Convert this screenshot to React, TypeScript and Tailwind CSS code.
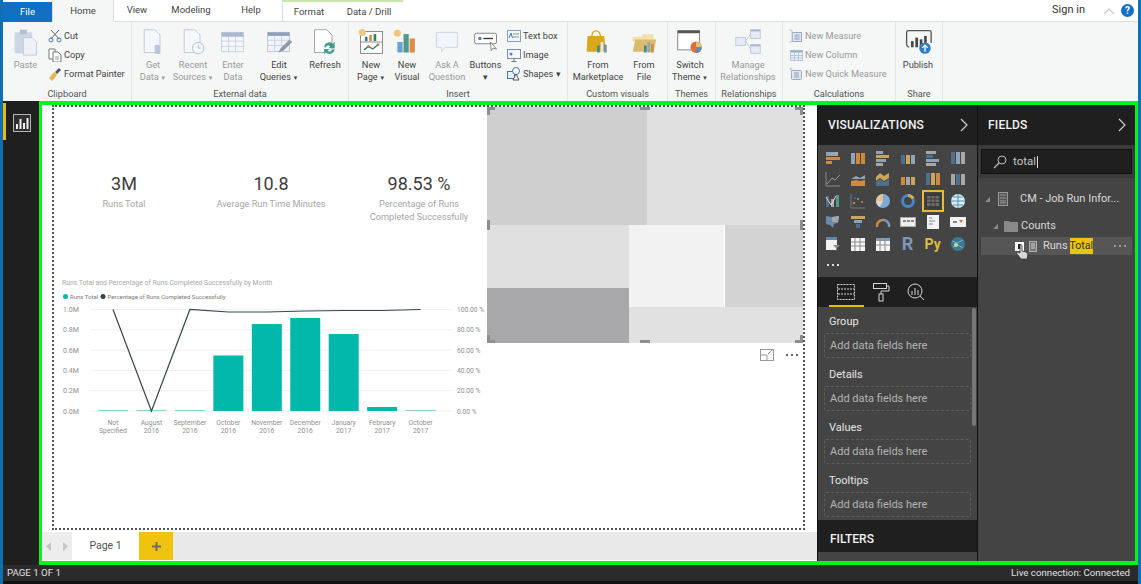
import React from "react";

const F = "font-[family-name:Roboto,sans-serif]";

const S = ({ w = 32, h = 32, children }: { w?: number; h?: number; children: React.ReactNode }) => {
  const big = w >= 30;
  return (
    <svg width={big ? w * 0.875 : w} height={big ? h * 0.875 : h} viewBox={`0 0 ${w} ${h}`} fill="none">{children}</svg>
  );
};

const Doc = () => <path d="M6 2h12l6 6v20H6z" fill="#f4f7fb" stroke="#b9c6d8" />;
const Icons: Record<string, React.ReactNode> = {
  paste: (
    <S>
      <rect x="3" y="5" width="20" height="24" fill="#cdd6e4" />
      <rect x="9" y="2" width="8" height="5" fill="#b4bfd0" />
      <path d="M13 11h10l5 5v15H13z" fill="#eef2f8" stroke="#c0cadb" />
    </S>
  ),
  get: (
    <S>
      <Doc />
      <path d="M24 20v9c0 1-5 1-6 0v-9c1-1 5-1 6 0z" fill="#b9c7dc" />
    </S>
  ),
  recent: (
    <S>
      <Doc />
      <circle cx="22" cy="23" r="6.5" fill="#f4f7fb" stroke="#a8bcd0" />
      <path d="M22 19v4h3" stroke="#a8bcd0" />
    </S>
  ),
  enter: (
    <S>
      <rect x="3" y="5" width="25" height="22" fill="#f4f7fb" stroke="#c5d0e0" />
      <rect x="3" y="5" width="25" height="5" fill="#a9b8cf" />
      <path d="M3 15h25M3 21h25M11 10v17M19 10v17" stroke="#c5d0e0" />
    </S>
  ),
  edit: (
    <S>
      <rect x="3" y="5" width="25" height="22" fill="#f0f4fa" stroke="#b5c2d6" />
      <rect x="3" y="5" width="25" height="4" fill="#8d9fba" />
      <path d="M3 14h25M3 20h25M11 9v18M19 9v18" stroke="#c5d0e0" />
      <path d="M15 28l3-5 10-10 3 3-10 10z" fill="#8f99a6" />
    </S>
  ),
  refresh: (
    <S>
      <path d="M4 2h14l6 6v20H4z" fill="#fff" stroke="#9a9a9a" />
      <path d="M15 22a6 6 0 0 1 10-4l2-2v7h-7l2-2a3 3 0 0 0-5 1zM27 24a6 6 0 0 1-10 4l-2 2v-6h6l-2 2a3 3 0 0 0 5-1z" fill="#3d9d8a" />
    </S>
  ),
  newpage: (
    <S>
      <rect x="4" y="4" width="25" height="25" fill="#fff" stroke="#7b7b7b" />
      <path d="M4 16h25" stroke="#7b7b7b" />
      <circle cx="6" cy="5" r="4" fill="#f0c87a" />
      <rect x="9" y="10" width="3" height="5" fill="#2f7f74" />
      <rect x="14" y="8" width="3" height="7" fill="#d98a3e" />
      <rect x="19" y="7" width="3" height="8" fill="#2f7f74" />
      <path d="M8 25l5-4 5 3 6-5" stroke="#2f7f74" strokeWidth="1.5" />
      <circle cx="13" cy="21" r="1.5" fill="#d9703e" />
      <circle cx="24" cy="19" r="1.5" fill="#d9703e" />
    </S>
  ),
  newvisual: (
    <S>
      <circle cx="5" cy="6" r="4" fill="#f0c87a" />
      <rect x="5" y="16" width="6" height="12" fill="#6f9fd8" />
      <rect x="12" y="7" width="6" height="21" fill="#4c9a8c" />
      <rect x="19" y="12" width="6" height="16" fill="#e08a45" />
    </S>
  ),
  ask: (
    <S>
      <path d="M4 5h24v17H14l-4 5v-5H4z" fill="#f2f6fc" stroke="#c3d2e6" />
    </S>
  ),
  buttons: (
    <S>
      <rect x="3" y="6" width="25" height="12" rx="2" fill="#fff" stroke="#777" />
      <circle cx="9" cy="12" r="2" fill="#4d80b8" />
      <path d="M13 12h11" stroke="#333" strokeWidth="1.5" />
      <path d="M21 16l1 10 2-3 4 1z" fill="#fff" stroke="#777" />
    </S>
  ),
  market: (
    <S>
      <path d="M4 9h19l2 18H3z" fill="#d9a81c" />
      <path d="M9 10c0-9 9-9 10 0" stroke="#d9a81c" strokeWidth="1.5" />
      <rect x="15" y="20" width="3" height="8" fill="#3e8f86" />
      <rect x="19" y="16" width="3" height="12" fill="#e8e8e8" />
      <rect x="23" y="19" width="3" height="9" fill="#6f92b6" />
    </S>
  ),
  file: (
    <S>
      <path d="M3 10h10l2-3h12v8H3z" fill="#f3e0ac" />
      <path d="M3 27l3-14h24l-3 14z" fill="#dcbb6e" />
      <rect x="16" y="20" width="3" height="8" fill="#3e8f86" />
      <rect x="20" y="16" width="3" height="12" fill="#8fa6bd" />
      <rect x="24" y="18" width="3" height="10" fill="#d98a3e" />
    </S>
  ),
  theme: (
    <S>
      <rect x="2" y="3" width="25" height="22" fill="#fff" stroke="#777" />
      <rect x="2" y="3" width="25" height="3" fill="#555" />
      <circle cx="23" cy="22" r="6.5" fill="#d9703e" />
      <path d="M23 22v-6.5a6.5 6.5 0 0 1 6.5 6.5z" fill="#e6c36b" />
      <path d="M23 22h6.5a6.5 6.5 0 0 1-6.5 6.5z" fill="#5c8db8" />
    </S>
  ),
  rel: (
    <S>
      <rect x="2" y="11" width="11" height="9" fill="#e5ecf5" stroke="#b9c7da" />
      <rect x="19" y="2" width="11" height="10" fill="#e5ecf5" stroke="#b9c7da" />
      <rect x="19" y="19" width="11" height="10" fill="#e5ecf5" stroke="#b9c7da" />
      <path d="M13 15l6-8M13 15l6 9" stroke="#b9c7da" />
      <rect x="19" y="2" width="11" height="2" fill="#a9b8cc" />
      <rect x="19" y="19" width="11" height="2" fill="#a9b8cc" />
    </S>
  ),
  publish: (
    <S w={32}>
      <path d="M3 19V5c0-1 1-2 2-2h24c1 0 2 1 2 2v12M3 19c0 1 1 2 3 3" stroke="#555" strokeWidth="1.5" />
      <rect x="8" y="15" width="3" height="7" fill="#444" />
      <rect x="13" y="11" width="3" height="11" fill="#444" />
      <rect x="18" y="13" width="3" height="9" fill="#444" />
      <rect x="23" y="9" width="3" height="8" fill="#444" />
      <circle cx="24" cy="23" r="6.5" fill="#2d7fc1" />
      <path d="M24 27v-7M21 22.5l3-3 3 3" stroke="#fff" strokeWidth="1.5" />
    </S>
  ),
};

const Small = {
  cut: (
    <S w={14} h={14}>
      <path d="M3 1l8 9M11 1L3 10" stroke="#666" />
      <circle cx="3" cy="11" r="2" stroke="#3a78b8" />
      <circle cx="11" cy="11" r="2" stroke="#3a78b8" />
    </S>
  ),
  copy: (
    <S w={14} h={14}>
      <path d="M1 1h6v10H1z" fill="#fff" stroke="#777" />
      <path d="M5 4h5l3 3v7H5z" fill="#fff" stroke="#777" />
      <path d="M7 9h4M7 11h4" stroke="#999" />
    </S>
  ),
  painter: (
    <S w={14} h={14}>
      <path d="M1 11l5-6 3 3-5 6z" fill="#e4b64e" />
      <path d="M7 5l4-4 2 2-4 4z" fill="#555" />
    </S>
  ),
  text: (
    <S w={14} h={14}>
      <rect x="0.5" y="1.5" width="13" height="11" fill="#f4f7fb" stroke="#8aa0bb" />
      <path d="M6 5h6M6 8h6" stroke="#8f8f8f" />
      <path d="M2 9l2-5 1.5 5" stroke="#3f78b5" />
    </S>
  ),
  image: (
    <S w={14} h={14}>
      <rect x="0.5" y="1.5" width="13" height="9" fill="#f4f7fb" stroke="#7d8ea4" />
      <circle cx="4" cy="6" r="1.5" fill="#4a86c2" />
      <path d="M7 10.5V13M4.5 13.5h5" stroke="#777" />
    </S>
  ),
  shapes: (
    <S w={14} h={14}>
      <rect x="0.5" y="4.5" width="7" height="7" fill="#e8f0fa" stroke="#3f78b5" />
      <circle cx="9" cy="4" r="3.5" fill="#fff" stroke="#3f78b5" />
      <path d="M9 7l3 6H6z" fill="#fff" stroke="#555" />
    </S>
  ),
  measure: (
    <S w={14} h={14}>
      <rect x="3.5" y="3.5" width="9" height="9" fill="#dfe7f2" stroke="#9aaac0" />
      <path d="M0 1h3v12H0" stroke="#bcc6d3" />
      <path d="M5.5 6h5M5.5 8h5M5.5 10h5" stroke="#8e9db3" />
    </S>
  ),
  column: (
    <S w={14} h={14}>
      <rect x="1.5" y="2.5" width="12" height="10" fill="#eef3f9" stroke="#b5c5da" />
      <rect x="1.5" y="2.5" width="12" height="2" fill="#98adc9" />
      <path d="M5.5 4v8M9.5 4v8M2 7.5h11M2 10h11" stroke="#b5c5da" />
    </S>
  ),
  quick: (
    <S w={14} h={14}>
      <rect x="2.5" y="3.5" width="10" height="9" rx="1" fill="#dfe7f2" stroke="#9aaac0" />
      <path d="M5 6h5M5 8h5M5 10h5" stroke="#8e9db3" />
      <circle cx="2" cy="2" r="1.5" fill="#c9d1dc" />
    </S>
  ),
};

const Large = ({ icon, l1, l2, gray, w, arrow }: { icon: string; l1: string; l2?: string; gray?: boolean; w: string; arrow?: boolean }) => (
  <div className={`flex flex-col items-center shrink-0 ${w}`}>
    <div className="h-[28px] mt-[6px]">{Icons[icon]}</div>
    <div className={`mt-[3px] text-[9.2px] leading-[12px] text-center whitespace-nowrap ${gray ? "text-[#9a9a9a]" : "text-[#444]"}`}>
      <div>{l1}</div>
      <div>{l2 ?? "\u00a0"}{arrow && <span className="text-[6px] align-middle"> ▼</span>}</div>
    </div>
  </div>
);

const SmallBtn = ({ icon, t, gray }: { icon: keyof typeof Small; t: string; gray?: boolean }) => (
  <div className="flex items-center gap-[2px] h-[19px] whitespace-nowrap">
    <span className="w-[14px] h-[14px] shrink-0 flex">{Small[icon]}</span>
    <span className={`text-[9.2px] ${gray ? "text-[#9a9a9a]" : "text-[#444]"}`}>{t}</span>
  </div>
);

const Group = ({ w, label, children, cls = "" }: { w: string; label: string; children: React.ReactNode; cls?: string }) => (
  <div className={`h-full shrink-0 flex flex-col border-r border-[#e4e5e5] ${w}`}>
    <div className={`flex-1 flex ${cls}`}>{children}</div>
    <div className="h-[17px] pt-[3px] text-center text-[9.2px] leading-[14px] text-[#555] whitespace-nowrap">{label}</div>
  </div>
);

const Vz = ({ k }: { k: number }) => {
  const o = "#d08a3c", b = "#8fa4b9", g = "#a7a7a7", t = "#c8a65c", d = "#4f6f8d";
  const bars = (cs: string[]) => (
    <>
      {cs.map((c, i) => (
        <rect key={i} x={1 + i * 5} y={2 + ((i * 5 + k) % 5)} width="4" height={12 - ((i * 5 + k) % 5)} fill={c} />
      ))}
    </>
  );
  const hbars = (cs: string[]) => (
    <>
      {cs.map((c, i) => (
        <rect key={i} x="1" y={1 + i * 4} width={13 - ((i + k) % 3) * 3} height="3" fill={c} />
      ))}
    </>
  );
  let n: React.ReactNode;
  switch (k) {
    case 0: n = <><rect x="1" y="2" width="8" height="4" fill={b} /><rect x="9" y="2" width="4" height="4" fill={g} /><rect x="1" y="7" width="14" height="3" fill={o} /><rect x="1" y="11" width="6" height="3" fill={o} /></>; break;
    case 1: n = bars([b, o, o]); break;
    case 2: n = hbars([b, t, b, g]); break;
    case 3: n = bars([d, t, b]); break;
    case 4: n = hbars([g, d, b, g]); break;
    case 5: n = bars([d, b, g]); break;
    case 6: n = <><path d="M1 1v14h14" stroke="#8b8b8b" /><path d="M2 13l5-6 3 2 5-5" stroke="#9a9a9a" /></>; break;
    case 7: n = <><path d="M1 8l5-3 4 2 5-3v4H1z" fill={b} /><path d="M1 10l5-1 4 1 5-1v6H1z" fill={o} /></>; break;
    case 8: n = <><path d="M1 6l4-4 4 3 5-3v5l-5 3-4-3-4 3z" fill={t} /><path d="M1 11l4-3 4 3 5-3v7H1z" fill={d} /></>; break;
    case 9: n = bars([o, g, t]); break;
    case 10: n = bars([d, t, o]); break;
    case 11: n = bars([g, d, g]); break;
    case 12: n = <><rect x="1" y="3" width="3" height="11" fill={d} /><rect x="6" y="6" width="3" height="8" fill={g} /><rect x="11" y="2" width="3" height="12" fill="#4e9a8c" /><path d="M1 4l5 8 5-9" stroke="#ddd" /></>; break;
    case 13: n = <><circle cx="4" cy="10" r="1.2" fill={o} /><circle cx="8" cy="6" r="1" fill={b} /><circle cx="12" cy="9" r="1" fill={o} /><circle cx="5" cy="5" r="1" fill={d} /><path d="M1 1v14h14" stroke="#777" /></>; break;
    case 14: n = <><circle cx="8" cy="8" r="7" fill="#7fa8d8" /><path d="M8 8V1a7 7 0 0 0-7 7z" fill="#e3c389" /><path d="M8 8H1a7 7 0 0 0 4 6z" fill="#d8d8d8" /></>; break;
    case 15: n = <><circle cx="8" cy="8" r="5.5" stroke="#4a84c4" strokeWidth="3" /><path d="M8 2.5a5.5 5.5 0 0 1 5 3" stroke="#d8a95a" strokeWidth="3" /></>; break;
    case 16: n = <><rect x="0" y="0" width="16" height="16" fill="#3b3b3b" /><rect x="2" y="3" width="12" height="10" fill="#6f6f6f" /><path d="M2 6h12M2 9.5h12M6 3v10M10 3v10" stroke="#3b3b3b" /></>; break;
    case 17: n = <><circle cx="8" cy="8" r="7" fill="#d6eef2" /><path d="M1 8h14M8 1v14M3 4h10M3 12h10" stroke="#5a8fb0" /></>; break;
    case 18: n = <><path d="M1 2l6 1 7-1-1 7-4 1-1 4-3-3-4-1z" fill="#6d88a8" /><path d="M7 3l7-1-1 6-6 0z" fill={g} /></>; break;
    case 19: n = <><rect x="1" y="2" width="14" height="3" fill={t} /><rect x="4" y="6" width="8" height="3" fill={b} /><rect x="6" y="10" width="4" height="4" fill={d} /></>; break;
    case 20: n = <><path d="M2 13a6 6 0 0 1 5-7" stroke={o} strokeWidth="2.5" /><path d="M7 6a6 6 0 0 1 7 7" stroke="#7a9cb8" strokeWidth="2.5" /></>; break;
    case 21: n = <><rect x="0.5" y="3.5" width="15" height="9" fill="#eee" stroke="#aaa" /><path d="M3 7h3M7 7h3M11 7h3" stroke="#888" strokeWidth="2" /></>; break;
    case 22: n = <><rect x="2" y="1" width="12" height="14" fill="#f2f2f2" /><path d="M4 4h3M4 7h6M4 10h4" stroke="#6d8aa6" /></>; break;
    case 23: n = <><rect x="0" y="3" width="16" height="10" fill="#f2f2f2" /><path d="M3 8h4" stroke="#888" strokeWidth="2" /><path d="M9 6h4l-2 3z" fill="#d9703e" /></>; break;
    case 24: n = <><rect x="1" y="1" width="11" height="13" fill="#f2f2f2" /><rect x="1" y="1" width="11" height="3" fill="#5f86ad" /><path d="M8 9h7l-3 3v3l-1-1v-2z" fill="#8a8a8a" /></>; break;
    case 25: n = <><rect x="1" y="2" width="14" height="13" fill="#f5f5f5" /><path d="M1 6h14M1 10h14M5 2v13M10 2v13" stroke="#8d8d8d" /></>; break;
    case 26: n = <><rect x="1" y="2" width="14" height="13" fill="#f5f5f5" /><rect x="1" y="2" width="14" height="3" fill="#7f9cb8" /><path d="M1 9h14M5 2v13M10 2v13" stroke="#8d8d8d" /></>; break;
    case 29: n = <><circle cx="8" cy="8" r="7" fill="#3f7a8a" /><path d="M2 5l5 2 6-3M3 11l5-2 5 3" stroke="#6eb0e0" /><circle cx="6" cy="9" r="2" fill="#c6d6a0" /></>; break;
    default: n = null;
  }
  if (k === 27) return <span className="w-[16px] text-center text-[18px] font-bold leading-[16px] text-[#7d97b5]">R</span>;
  if (k === 28) return <span className="w-[16px] text-center text-[14px] font-bold leading-[16px] text-[#e0bd3c]">Py</span>;
  const svg = <svg width="16" height="16" viewBox="0 0 16 16" fill="none">{n}</svg>;
  if (k === 16) return <span className="outline outline-[2px] outline-[#e8b93f] outline-offset-[1px] flex">{svg}</span>;
  return svg;
};

const Well = ({ t }: { t: string }) => (
  <div>
    <div className="h-[26px] pt-[7px] pl-[11px] text-[11px] leading-[15px] text-[#e4e4e4]">{t}</div>
    <div className="mx-[6px] h-[25px] mb-[2px] border border-dashed border-[#5d5d5d] rounded-[2px] pl-[5px] text-[11px] leading-[24px] text-[#b4b4b4]">Add data fields here</div>
  </div>
);

const Header = ({ t }: { t: string }) => (
  <div className="h-[40px] shrink-0 bg-[#1f1f1f] flex items-center justify-between pl-[10px] pr-[8px] text-[#f2f2f2]">
    <span className="text-[12px] font-medium tracking-[0.2px]">{t}</span>
    <svg width="10" height="14" viewBox="0 0 10 14" fill="none"><path d="M2 1l6 6-6 6" stroke="#d0d0d0" strokeWidth="1.2" /></svg>
  </div>
);

const Card = ({ v, l, w, l2 }: { v: string; l: string; w: string; l2?: string }) => (
  <div className={`flex flex-col items-center shrink-0 ${w}`}>
    <div className="text-[18px] leading-[24px] text-[#3c3c3c]">{v}</div>
    <div className="mt-[2px] text-[9.2px] leading-[12.5px] text-[#a6a6a6] text-center whitespace-nowrap">{l}{l2 && <><br />{l2}</>}</div>
  </div>
);

const Chart = () => {
  const months = [["Not", "Specified"], ["August", "2016"], ["September", "2016"], ["October", "2016"], ["November", "2016"], ["December", "2016"], ["January", "2017"], ["February", "2017"], ["October", "2017"]];
  const tops = [410.5, 410.5, 410.5, 355.5, 324, 318, 334, 407, 410.5];
  const line = [309.5, 411, 309.5, 312, 312, 311, 310.5, 310.5, 309.5];
  const ox = 54, oy = 270;
  const left = ["1.0M", "0.8M", "0.6M", "0.4M", "0.2M", "0.0M"];
  const right = ["100.00 %", "80.00 %", "60.00 %", "40.00 %", "20.00 %", "0.00 %"];
  return (
    <svg width="433" height="170" viewBox={`${ox} ${oy} 433 170`} className="block" fontFamily="Roboto, sans-serif">
      <text x="62" y="284.5" fontSize="6.8" fill="#a8a8a8">Runs Total and Percentage of Runs Completed Successfully by Month</text>
      <circle cx="65.5" cy="296.5" r="2.5" fill="#01b8aa" />
      <text x="70" y="299" fontSize="6" fill="#777">Runs Total</text>
      <circle cx="103" cy="296.5" r="2.5" fill="#374649" />
      <text x="107.5" y="299" fontSize="6" fill="#777">Percentage of Runs Completed Successfully</text>
      {left.map((t, i) => {
        const y = 309.5 + i * 20.3;
        return (
          <g key={t}>
            <line x1="90" x2="452" y1={y} y2={y} stroke="#f1f1f1" />
            <text x="63" y={y + 2.5} fontSize="7" fill="#8f8f8f">{t}</text>
            <text x="457" y={y + 2.5} fontSize="6.7" fill="#8f8f8f">{right[i]}</text>
          </g>
        );
      })}
      {tops.map((y, i) => (
        <rect key={i} x={98 + i * 38.45} y={y} width="30" height={411 - y} fill="#01b8aa" />
      ))}
      <polyline points={line.map((y, i) => `${113 + i * 38.45},${y}`).join(" ")} stroke="#374649" strokeWidth="1.2" fill="none" />
      {months.map((m, i) => (
        <text key={i} textAnchor="middle" fontSize="6.8" fill="#8f8f8f">
          <tspan x={113 + i * 38.45} y="424.5">{m[0]}</tspan>
          <tspan x={113 + i * 38.45} y="433">{m[1]}</tspan>
        </text>
      ))}
    </svg>
  );
};

const Handle = ({ cls }: { cls: string }) => <div className={`absolute bg-[#8e8e8e] ${cls}`} />;

const Treemap = () => (
  <div className="w-[316px] flex flex-col">
    <div className="relative h-[236px] flex flex-col">
      <div className="h-[118px] flex">
        <div className="w-[160px] bg-[#cfcfcf]" />
        <div className="flex-1 bg-[#e0e0e0]" />
      </div>
      <div className="flex-1 flex">
        <div className="w-[142px] flex flex-col">
          <div className="h-[63px] bg-[#e0e0e0]" />
          <div className="flex-1 bg-[#a8a8ab]" />
        </div>
        <div className="flex-1 flex flex-col">
          <div className="h-[82px] flex">
            <div className="w-[95px] bg-[#f2f2f2]" />
            <div className="flex-1 ml-[1px] bg-[#d3d3d3]" />
          </div>
          <div className="flex-1 bg-[#e1e1e1]" />
        </div>
      </div>
      <Handle cls="left-0 top-0 w-[8px] h-[3px]" />
      <Handle cls="left-0 top-0 w-[3px] h-[8px]" />
      <Handle cls="right-0 top-0 w-[8px] h-[3px]" />
      <Handle cls="right-0 top-0 w-[3px] h-[8px]" />
      <Handle cls="left-0 bottom-0 w-[8px] h-[3px]" />
      <Handle cls="left-0 bottom-0 w-[3px] h-[8px]" />
      <Handle cls="right-0 bottom-0 w-[8px] h-[3px]" />
      <Handle cls="right-0 bottom-0 w-[3px] h-[8px]" />
      <Handle cls="left-[153px] top-0 w-[10px] h-[3px]" />
      <Handle cls="left-[153px] bottom-0 w-[10px] h-[3px]" />
      <Handle cls="left-0 top-[113px] w-[3px] h-[10px]" />
      <Handle cls="right-0 top-[113px] w-[3px] h-[10px]" />
    </div>
    <div className="flex items-center justify-end pt-[6px] pr-[5px] gap-[12px]">
      <svg width="14" height="12" viewBox="0 0 14 12" fill="none">
        <rect x="0.5" y="0.5" width="13" height="11" stroke="#9a9a9a" />
        <path d="M0 6h7v6M8 5l4-4" stroke="#9a9a9a" />
      </svg>
      <div className="flex gap-[3px]">
        {[0, 1, 2].map((i) => <span key={i} className="w-[2px] h-[2px] bg-[#666]" />)}
      </div>
    </div>
  </div>
);

export default function App() {
  return (
    <div className={`w-[1141px] h-[584px] overflow-hidden flex flex-col bg-[#1f1f1f] border-x-[3px] border-[#0f6fb3] ${F}`}>
      {/* Tab strip */}
      <div className="h-[22px] shrink-0 bg-white border-b border-[#dcdcdc] flex items-end text-[9.5px] text-[#444]">
        <div className="w-[49px] h-[20px] bg-[#1170c4] text-white text-center leading-[20px] mb-[-1px]">File</div>
        <div className="w-[62px] h-[22px] bg-[#f5f6f6] border-x border-[#dcdcdc] text-center leading-[22px] mb-[-1px]">Home</div>
        <div className="w-[46px] text-center leading-[22px]">View</div>
        <div className="w-[62px] text-center leading-[22px]">Modeling</div>
        <div className="w-[58px] text-center leading-[22px]">Help</div>
        <div className="w-[121px] h-[21px] ml-[2px] border-t-[2px] border-t-[#c7e8a8] border-l border-l-[#dcdcdc] flex leading-[20px]">
          <div className="w-[52px] text-center">Format</div>
          <div className="flex-1 text-center">Data / Drill</div>
        </div>
        <div className="flex-1" />
        <div className="text-[11px] leading-[22px] text-[#333] mr-[18px]">Sign in</div>
        <svg className="mb-[6px] mr-[6px]" width="12" height="8" viewBox="0 0 12 8" fill="none"><path d="M1 7l5-5 5 5" stroke="#c8c8c8" strokeWidth="1.2" /></svg>
        <div className="w-[13px] h-[13px] mb-[4px] mr-[4px] rounded-full bg-[#1170c4] text-white text-[10px] leading-[13px] text-center font-bold">?</div>
      </div>

      {/* Ribbon */}
      <div className="h-[79px] shrink-0 bg-[#f5f6f6] flex">
        <Group w="w-[129px]" label="Clipboard">
          <Large icon="paste" l1="Paste" gray w="w-[45px]" />
          <div className="pt-[4px] flex flex-col">
            <SmallBtn icon="cut" t="Cut" />
            <SmallBtn icon="copy" t="Copy" />
            <SmallBtn icon="painter" t="Format Painter" />
          </div>
        </Group>
        <Group w="w-[217px]" label="External data" cls="pl-[2px]">
          <Large icon="get" l1="Get" l2="Data" gray arrow w="w-[38px]" />
          <Large icon="recent" l1="Recent" l2="Sources" gray arrow w="w-[42px]" />
          <Large icon="enter" l1="Enter" l2="Data" gray w="w-[38px]" />
          <Large icon="edit" l1="Edit" l2="Queries" arrow w="w-[54px]" />
          <Large icon="refresh" l1="Refresh" w="w-[38px]" />
        </Group>
        <Group w="w-[219px]" label="Insert" cls="pl-[2px]">
          <Large icon="newpage" l1="New" l2="Page" arrow w="w-[40px]" />
          <Large icon="newvisual" l1="New" l2="Visual" w="w-[32px]" />
          <Large icon="ask" l1="Ask A" l2="Question" gray w="w-[48px]" />
          <Large icon="buttons" l1="Buttons" l2="▾" w="w-[29px]" />
          <div className="pt-[4px] pl-[7px] flex flex-col">
            <SmallBtn icon="text" t="Text box" />
            <SmallBtn icon="image" t="Image" />
            <SmallBtn icon="shapes" t="Shapes ▾" />
          </div>
        </Group>
        <Group w="w-[100px]" label="Custom visuals" cls="pl-[2px]">
          <Large icon="market" l1="From" l2="Marketplace" w="w-[56px]" />
          <Large icon="file" l1="From" l2="File" w="w-[36px]" />
        </Group>
        <Group w="w-[48px]" label="Themes">
          <Large icon="theme" l1="Switch" l2="Theme" arrow w="w-[44px]" />
        </Group>
        <Group w="w-[67px]" label="Relationships">
          <Large icon="rel" l1="Manage" l2="Relationships" gray w="w-[64px]" />
        </Group>
        <Group w="w-[113px]" label="Calculations" cls="pl-[6px]">
          <div className="pt-[4px] flex flex-col">
            <SmallBtn icon="measure" t="New Measure" gray />
            <SmallBtn icon="column" t="New Column" gray />
            <SmallBtn icon="quick" t="New Quick Measure" gray />
          </div>
        </Group>
        <Group w="w-[47px]" label="Share">
          <Large icon="publish" l1="Publish" w="w-[44px]" />
        </Group>
      </div>

      {/* Middle */}
      <div className="h-[464px] shrink-0 flex">
        <div className="w-[36px] shrink-0 bg-[#1f1f1f] flex items-start">
          <div className="w-[3px] h-[37px] mt-[2px] bg-[#e8b913]" />
          <svg className="ml-[7px] mt-[13px]" width="18" height="18" viewBox="0 0 18 18" fill="none">
            <rect x="0.5" y="0.5" width="17" height="17" fill="#2f2f2f" stroke="#b5b5b5" />
            <path d="M4 15v-5M7.5 15V5M11 15V9M14.5 15V4" stroke="#f2f2f2" strokeWidth="2" />
          </svg>
        </div>
        <div className="flex-1 min-w-0 border-x-[3px] border-y-[4px] border-[#00f520] flex">
          {/* Canvas */}
          <div className="w-[775px] shrink-0 flex flex-col bg-white">
            <div className="h-[427px] shrink-0 pl-[10px]">
              <div className="w-[753px] h-[425px] border-2 border-dotted border-[#555] flex">
                <div className="w-[433px] shrink-0 flex flex-col">
                  <div className="h-[163px] pt-[65px] flex">
                    <Card v="3M" l="Runs Total" w="w-[140px]" />
                    <Card v="10.8" l="Average Run Time Minutes" w="w-[154px]" />
                    <Card v="98.53 %" l="Percentage of Runs" l2="Completed Successfully" w="w-[142px]" />
                  </div>
                  <Chart />
                </div>
                <Treemap />
              </div>
            </div>
            <div className="flex-1 bg-[#e9e9e9] flex border-b-[1px] border-white">
              <div className="w-[30px] flex items-center justify-between px-[4px] bg-[#ededed]">
                <svg width="5" height="9" viewBox="0 0 5 9" fill="#c4c4c4"><path d="M5 0v9L0 4.5z" /></svg>
                <svg width="5" height="9" viewBox="0 0 5 9" fill="#c4c4c4"><path d="M0 0v9l5-4.5z" /></svg>
              </div>
              <div className="w-[67px] bg-white text-center text-[10.5px] leading-[28px] text-[#555]">Page 1</div>
              <div className="w-[34px] bg-[#f0c30f] flex items-center justify-center">
                <svg width="9" height="9" viewBox="0 0 9 9"><path d="M3.5 0h2v3.5H9v2H5.5V9h-2V5.5H0v-2h3.5z" fill="#6b6b6b" /></svg>
              </div>
            </div>
          </div>

          {/* Visualizations */}
          <div className="w-[160px] shrink-0 flex flex-col bg-[#444] border-l border-[#111] text-white">
            <Header t="VISUALIZATIONS" />
            <div className="h-[132px] shrink-0 pl-[2px] pt-[2px]">
              <div className="grid grid-cols-[repeat(6,25px)] auto-rows-[21.5px] justify-items-center items-center">
                {Array.from({ length: 30 }).map((_, i) => <Vz key={i} k={i} />)}
                <div className="flex gap-[3px] items-center h-[16px]">
                  {[0, 1, 2].map((i) => <span key={i} className="w-[2px] h-[2px] bg-[#ddd]" />)}
                </div>
              </div>
            </div>
            <div className="h-[30px] shrink-0 bg-[#1f1f1f] flex items-center pl-[19px] gap-[17px] relative">
              <svg width="18" height="16" viewBox="0 0 18 16" fill="none">
                <rect x="0.5" y="0.5" width="17" height="15" stroke="#d6d6d6" strokeDasharray="2 1" />
                <path d="M1 5h16M1 10h16" stroke="#d6d6d6" strokeDasharray="2 1" />
              </svg>
              <svg width="18" height="20" viewBox="0 0 18 20" fill="none">
                <rect x="1.5" y="1.5" width="13" height="5" stroke="#d6d6d6" />
                <path d="M15 4h2v5H9v3" stroke="#d6d6d6" />
                <rect x="7" y="12" width="4" height="7" stroke="#d6d6d6" />
              </svg>
              <svg width="18" height="18" viewBox="0 0 18 18" fill="none">
                <circle cx="8" cy="8" r="7" stroke="#d6d6d6" />
                <path d="M5 12V8M8 12V5M11 12V7M13 13l4 4" stroke="#d6d6d6" />
              </svg>
              <div className="absolute left-[11px] bottom-0 w-[35px] h-[2px] bg-[#e8b913]" />
            </div>
            <div className="flex-1 min-h-0 flex flex-col relative">
              <div className="h-[213px] shrink-0">
                <Well t="Group" />
                <Well t="Details" />
                <Well t="Values" />
                <Well t="Tooltips" />
              </div>
              <div className="h-[32px] shrink-0 bg-[#1f1f1f] flex items-center pt-[6px] pl-[12px] text-[12px] font-medium text-[#f2f2f2]">FILTERS</div>
              <div className="absolute right-[1px] top-[1px] w-[4px] h-[118px] rounded-[2px] bg-[#777]" />
            </div>
          </div>

          {/* Fields */}
          <div className="flex-1 min-w-0 flex flex-col bg-[#444] border-l border-[#111] text-white">
            <Header t="FIELDS" />
            <div className="h-[33px] shrink-0 bg-[#3a3a3a] px-[3px] pt-[4px]">
              <div className="h-[25px] bg-[#1f1f1f] border border-[#111] flex items-center pl-[11px] gap-[6px]">
                <svg width="14" height="14" viewBox="0 0 14 14" fill="none">
                  <circle cx="9" cy="5" r="4" stroke="#bdbdbd" />
                  <path d="M6 8l-5 5" stroke="#bdbdbd" strokeWidth="1.3" />
                </svg>
                <span className="text-[11.5px] text-[#c4c4c4]">total</span>
                <span className="w-[1px] h-[12px] bg-[#ddd] ml-[-5px]" />
              </div>
            </div>
            <div className="pt-[10px] text-[11px] text-[#d9d9d9]">
              <div className="h-[22px] flex items-center pl-[7px]">
                <svg width="5" height="5" viewBox="0 0 5 5"><path d="M5 0v5H0z" fill="#8b8b8b" /></svg>
                <svg className="ml-[7px]" width="12" height="14" viewBox="0 0 12 14" fill="none">
                  <rect x="1.5" y="0.5" width="9" height="13" fill="#555" stroke="#9a9a9a" />
                  <path d="M3 3h6M3 6h6M3 9h6M3 11h6" stroke="#9a9a9a" />
                </svg>
                <span className="ml-[11px] whitespace-nowrap">CM - Job Run Infor...</span>
              </div>
              <div className="h-[26px] mt-[3px] flex items-center pl-[15px]">
                <svg width="5" height="5" viewBox="0 0 5 5"><path d="M5 0v5H0z" fill="#8b8b8b" /></svg>
                <svg className="ml-[6px]" width="14" height="12" viewBox="0 0 14 12"><path d="M0 1h5l1 1h8v10H0z" fill="#8a8a8a" /></svg>
                <span className="ml-[3px]">Counts</span>
              </div>
              <div className="relative h-[18px] mx-[3px] mt-[-2px] bg-[#565656] rounded-[1px] flex items-center pl-[34px]">
                <span className="w-[9px] h-[9px] bg-white border-[2px] border-white flex items-center justify-center"><span className="w-[3px] h-[5px] bg-[#222]" /></span>
                <svg className="ml-[5px]" width="8" height="11" viewBox="0 0 8 11" fill="none">
                  <rect x="0.5" y="0.5" width="7" height="10" fill="#777" stroke="#b0b0b0" />
                  <path d="M2 3h4M2 5h4M2 7h4" stroke="#ccc" />
                </svg>
                <span className="ml-[6px] whitespace-nowrap">Runs</span>
                <span className="ml-[2px] bg-[#eec211] text-[#333] whitespace-nowrap text-[10.5px]">Total</span>
                <div className="absolute right-[6px] top-[8px] flex gap-[3px]">
                  {[0, 1, 2].map((i) => <span key={i} className="w-[2px] h-[2px] bg-[#999]" />)}
                </div>
                <svg className="absolute left-[35px] top-[7px]" width="13" height="16" viewBox="0 0 13 16">
                  <path d="M4 1c1-1 2 0 2 1v5l4 1c2 1 2 3 1 7H5L1 10c-1-1 1-3 3-1z" fill="#d9d9d9" stroke="#333" strokeWidth="0.8" />
                </svg>
              </div>
            </div>
          </div>
        </div>
      </div>

      {/* Status bar */}
      <div className="h-[16px] shrink-0 bg-[#2b2b2b] flex items-center justify-between pl-[4px] pr-[8px] text-[9.7px] text-[#e0e0e0]">
        <span>PAGE 1 OF 1</span>
        <span>Live connection: Connected</span>
      </div>
      <div className="flex-1 bg-[#111]" />
    </div>
  );
}
